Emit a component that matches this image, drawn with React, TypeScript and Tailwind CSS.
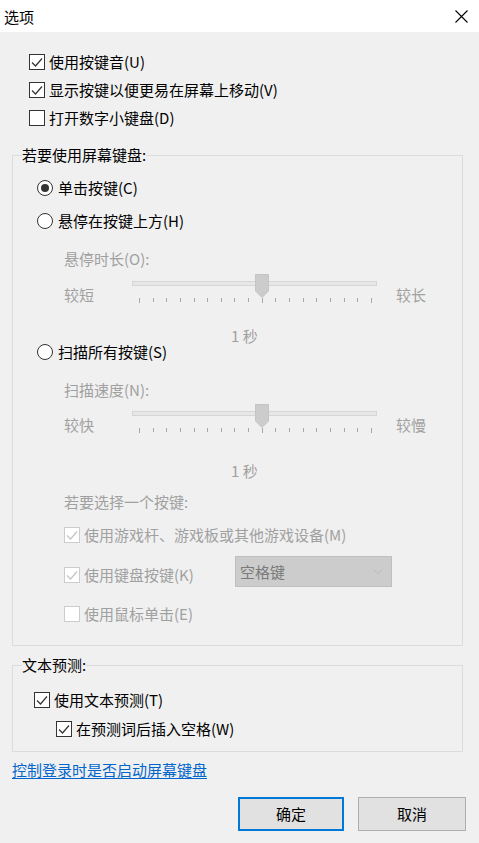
import { ChevronDown } from 'lucide-react'

const font = { fontFamily: '"Noto Sans CJK SC", "Microsoft YaHei", sans-serif' }

function CheckBox({ checked, disabled }: { checked?: boolean; disabled?: boolean }) {
  return (
    <span
      className={
        'w-4 h-4 shrink-0 border flex items-center justify-center ' +
        (disabled ? 'border-[#cccccc] bg-white' : 'border-[#333333] bg-white')
      }
    >
      {checked && (
        <svg width="14" height="14" viewBox="0 0 14 14">
          <polyline
            points="2,7.5 5.5,11 12,3.5"
            fill="none"
            stroke={disabled ? '#c4c4c4' : '#333333'}
            strokeWidth="1.2"
          />
        </svg>
      )}
    </span>
  )
}

function Radio({ selected }: { selected?: boolean }) {
  return (
    <span className="w-4 h-4 shrink-0 rounded-full border border-[#333333] bg-white flex items-center justify-center">
      {selected && <span className="w-2 h-2 rounded-full bg-[#333333]" />}
    </span>
  )
}

function Slider({ left, right }: { left: string; right: string }) {
  const ticks = Array.from({ length: 18 })
  return (
    <div className="flex h-[30px] ml-[27px] text-[#a0a0a0]">
      <span className="w-[68px] mt-[11px] h-5 leading-5">{left}</span>
      {/* track + thumb + ticks */}
      <div className="relative w-[245px] h-[30px]">
        <div className="absolute left-0 right-0 top-[7px] h-[5px] border border-[#d6d6d6] bg-[#e7e7e7]" />
        <svg className="absolute left-[123px] top-0" width="14" height="24" viewBox="0 0 14 24">
          <path d="M0.5 0.5 H13.5 V17 L7 23.5 L0.5 17 Z" fill="#cccccc" stroke="#c4c4c4" />
        </svg>
        <div className="absolute left-[7px] w-[233px] top-[24px] flex justify-between items-start">
          {ticks.map((_, i) => (
            <span
              key={i}
              className={'w-px bg-[#a8a8a8] ' + (i === 0 || i === 17 || i === 9 ? 'h-[5px]' : 'h-[4px]')}
            />
          ))}
        </div>
      </div>
      <span className="ml-[19px] mt-[11px] h-5 leading-5">{right}</span>
    </div>
  )
}

export default function App() {
  return (
    <div className="w-[479px] h-[843px] bg-[#f0f0f0] text-[15px] text-black overflow-hidden" style={font}>
      {/* Title bar */}
      <div className="h-8 bg-white flex items-center justify-between pl-[4px] pr-[10px]">
        <span className="leading-5 mt-[2px]">选项</span>
        <svg width="15" height="15" viewBox="0 0 15 15">
          <path d="M1.5 1.5 L13.5 13.5 M13.5 1.5 L1.5 13.5" stroke="#000" strokeWidth="1.1" />
        </svg>
      </div>

      <div className="pl-[12px] pr-[16px]">
        {/* Top checkboxes */}
        <div className="pt-[16px] pl-[17px] flex flex-col">
          {[
            ['使用按键音(U)', true],
            ['显示按键以便更易在屏幕上移动(V)', true],
            ['打开数字小键盘(D)', false],
          ].map(([label, checked]) => (
            <div key={label as string} className="h-7 flex items-center gap-[4px]">
              <CheckBox checked={checked as boolean} />
              <span className="leading-5">{label}</span>
            </div>
          ))}
        </div>

        {/* Screen keyboard group */}
        <fieldset className="mt-[13px] border border-[#dcdcdc] px-0 pb-[21px]">
          <legend className="ml-[9px] leading-5">若要使用屏幕键盘:</legend>
          <div className="pl-[24px] flex flex-col">
            <div className="mt-[13px] h-5 flex items-center gap-[5px]">
              <Radio selected />
              <span className="leading-5">单击按键(C)</span>
            </div>
            <div className="mt-[13px] h-5 flex items-center gap-[5px]">
              <Radio />
              <span className="leading-5">悬停在按键上方(H)</span>
            </div>
            <div className="mt-[18px] h-5 leading-5 ml-[27px] text-[#a0a0a0]">悬停时长(O):</div>
            <div className="mt-[5px]">
              <Slider left="较短" right="较长" />
            </div>
            <div className="mt-[24px] h-4 leading-4 ml-[194px] text-[#a0a0a0]">1 秒</div>
            <div className="h-4 flex items-center gap-[5px]">
              <Radio />
              <span className="leading-5">扫描所有按键(S)</span>
            </div>
            <div className="mt-[20px] h-5 leading-5 ml-[27px] text-[#a0a0a0]">扫描速度(N):</div>
            <div className="mt-[4px]">
              <Slider left="较快" right="较慢" />
            </div>
            <div className="mt-[29px] h-4 leading-4 ml-[194px] text-[#a0a0a0]">1 秒</div>
            <div className="mt-[13px] h-5 leading-5 ml-[27px] text-[#a0a0a0]">若要选择一个按键:</div>

            <div className="ml-[27px] text-[#a0a0a0] flex flex-col">
              <div className="mt-[13px] h-5 flex items-center gap-[4px]">
                <CheckBox checked disabled />
                <span className="leading-5">使用游戏杆、游戏板或其他游戏设备(M)</span>
              </div>
              <div className="mt-[11px] h-[31px] flex items-center">
                <div className="w-[171px] mt-[6px] flex items-center gap-[4px]">
                  <CheckBox checked disabled />
                  <span className="leading-5">使用键盘按键(K)</span>
                </div>
                <div className="w-[157px] h-[31px] border border-[#bfbfbf] bg-[#cccccc] flex items-center justify-between pl-[4px] pr-[6px] text-[#7a7a7a]">
                  <span className="leading-5">空格键</span>
                  <ChevronDown size={14} strokeWidth={1} className="text-[#a8a8a8]" />
                </div>
              </div>
              <div className="mt-[17px] h-5 flex items-center gap-[4px]">
                <CheckBox disabled />
                <span className="leading-5">使用鼠标单击(E)</span>
              </div>
            </div>
          </div>
        </fieldset>

        {/* Text prediction group */}
        <fieldset className="mt-[9px] border border-[#dcdcdc] px-0 pb-[12px]">
          <legend className="ml-[9px] leading-5">文本预测:</legend>
          <div className="pl-[21px] flex flex-col">
            <div className="mt-[15px] h-5 flex items-center gap-[4px]">
              <CheckBox checked />
              <span className="leading-5">使用文本预测(T)</span>
            </div>
            <div className="mt-[9px] ml-[22px] h-5 flex items-center gap-[4px]">
              <CheckBox checked />
              <span className="leading-5">在预测词后插入空格(W)</span>
            </div>
          </div>
        </fieldset>

        <div className="mt-[8px] h-5 leading-5">
          <a className="text-[#0066cc] underline underline-offset-2 cursor-pointer">控制登录时是否启动屏幕键盘</a>
        </div>

        {/* Buttons */}
        <div className="mt-[17px] ml-[226px] -mr-[3px] flex gap-[14px]">
          <button className="shrink-0 w-[106px] h-[34px] border-2 border-[#0078d7] bg-[#e1e1e1] leading-5">确定</button>
          <button className="shrink-0 w-[108px] h-[34px] border border-[#adadad] bg-[#e1e1e1] leading-5">取消</button>
        </div>
      </div>
    </div>
  )
}
